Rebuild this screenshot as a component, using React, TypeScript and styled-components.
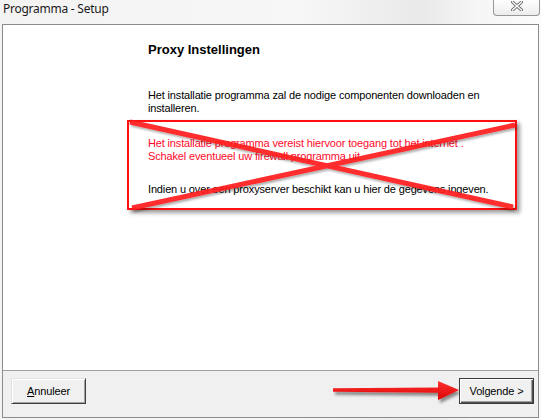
import React from "react";
import styled, { createGlobalStyle } from "styled-components";

const Global = createGlobalStyle`
  html, body { margin: 0; padding: 0; background: #f7f7f7; }
  body { font-family: "Liberation Sans", Arial, sans-serif; }
`;

const Window = styled.div`
  width: 541px;
  height: 420px;
  box-sizing: border-box;
  display: flex;
  flex-direction: column;
  background: linear-gradient(90deg, #f3f3f3 0%, #f7f7f7 55%, #e9e9e9 78%, #f6f6f6 88%, #fbfbfb 100%);
  padding-bottom: 2px;
`;

const TitleBar = styled.div`
  height: 24px;
  flex: none;
  display: flex;
  align-items: flex-start;
  justify-content: space-between;
  padding: 0 1px 0 3px;
`;

const Title = styled.div`
  font-family: "Noto Sans", "Open Sans", sans-serif;
  font-size: 12px;
  letter-spacing: -0.25px;
  line-height: 16px;
  padding-top: 1px;
  color: #1a1a1a;
`;

const CloseButton = styled.div`
  width: 47px;
  height: 16px;
  box-sizing: border-box;
  border: 1px solid #979797;
  border-top: none;
  border-radius: 0 0 4px 4px;
  background: linear-gradient(#fefefe, #ececec);
  display: flex;
  justify-content: center;
  align-items: flex-start;
  padding-top: 1px;
`;

const Dialog = styled.div`
  flex: 1;
  margin: 0 2px;
  border: 1px solid #8c8c8c;
  display: flex;
  flex-direction: column;
  background: #fff;
`;

const Panel = styled.div`
  flex: 1;
  background: #fff;
  padding: 17px 0 0 124px;
  font-size: 11px;
  line-height: 13px;
  letter-spacing: -0.15px;
  color: #000;
`;

const Heading = styled.div`
  margin-left: 21px;
  font-weight: bold;
  font-size: 13px;
  line-height: 16px;
  letter-spacing: 0;
`;

const Text = styled.p<{ $red?: boolean; $gap?: number }>`
  margin: ${(p) => p.$gap ?? 0}px 0 0 0;
  width: 360px;
  color: ${(p) => (p.$red ? "#ff0a2a" : "#000")};
`;

const Intro = styled(Text)`
  margin-left: 21px;
`;

const Annotation = styled.div`
  position: relative;
  width: 390px;
  box-sizing: border-box;
  margin-top: 5px;
  border: 2px solid #ff1010;
  padding: 15px 0 12px 19px;
  box-shadow: 3px 3px 4px rgba(0, 0, 0, 0.38);
`;

const Cross = styled.svg`
  position: absolute;
  top: -2px;
  left: -2px;
  overflow: visible;
  pointer-events: none;
`;

const Footer = styled.div`
  height: 39px;
  flex: none;
  box-sizing: content-box;
  border-top: 1px solid #a0a0a0;
  background: #f0f0f0;
  display: flex;
  align-items: flex-start;
  padding: 7px 4px 0 8px;
`;

const Spacer = styled.div`
  flex: 1;
`;

const Button = styled.button<{ $default?: boolean }>`
  width: 75px;
  height: 26px;
  box-sizing: border-box;
  padding: 0;
  font-family: "Liberation Sans", Arial, sans-serif;
  font-size: 11px;
  letter-spacing: -0.15px;
  color: #000;
  background: #f0f0f0;
  border: 1px solid;
  border-color: ${(p) => (p.$default ? "#3a3a3a" : "#e2e2e2 #404040 #404040 #e2e2e2")};
  box-shadow: ${(p) =>
    p.$default
      ? "inset 1px 1px #fff, inset -1px -1px #505050, inset -2px -2px #a0a0a0"
      : "inset 1px 1px #fff, inset -1px -1px #a0a0a0"};
`;

const Arrow = styled.svg`
  flex: none;
  overflow: visible;
`;

export default function App() {
  return (
    <>
      <Global />
      <Window>
        <TitleBar>
          <Title>Programma - Setup</Title>
          <CloseButton>
            <svg width="12" height="10" viewBox="0 0 12 10">
              <path d="M1.5 1 L10.5 9 M10.5 1 L1.5 9" stroke="#6d6d6d" strokeWidth="3.2" strokeLinecap="square" />
              <path d="M1.5 1 L10.5 9 M10.5 1 L1.5 9" stroke="#ffffff" strokeWidth="1.3" strokeLinecap="square" />
            </svg>
          </CloseButton>
        </TitleBar>
        <Dialog>
          <Panel>
            <Heading>Proxy Instellingen</Heading>
            <Intro $gap={31}>
              Het installatie programma zal de nodige componenten downloaden en installeren.
            </Intro>
            <Annotation>
              <Text $red>
                Het installatie programma vereist hiervoor toegang tot het internet .
                <br />
                Schakel eventueel uw firewall programma uit.
              </Text>
              <Text $gap={20}>
                Indien u over een proxyserver beschikt kan u hier de gegevens ingeven.
              </Text>
              <Cross width="390" height="90" viewBox="0 0 390 90">
                <defs>
                  <filter id="xs" x="-5%" y="-20%" width="110%" height="140%">
                    <feDropShadow dx="1.5" dy="2" stdDeviation="1.2" floodColor="#000" floodOpacity="0.35" />
                  </filter>
                </defs>
                <g filter="url(#xs)" stroke="#ff1a1a" strokeWidth="5" opacity="0.92">
                  <line x1="3" y1="2" x2="386" y2="87" />
                  <line x1="5" y1="88" x2="388" y2="5" />
                </g>
              </Cross>
            </Annotation>
          </Panel>
          <Footer>
            <Button>
              <u>A</u>nnuleer
            </Button>
            <Spacer />
            <Arrow width="126" height="28" viewBox="0 0 126 28">
              <defs>
                <filter id="as" x="-10%" y="-60%" width="125%" height="220%">
                  <feDropShadow dx="2" dy="3" stdDeviation="1.6" floodColor="#000" floodOpacity="0.45" />
                </filter>
                <linearGradient id="ag" x1="0" y1="0" x2="0" y2="1">
                  <stop offset="0" stopColor="#ff3434" />
                  <stop offset="1" stopColor="#dc0000" />
                </linearGradient>
              </defs>
              <path
                d="M0 10.2 L105 9.4 L105 3 L126 12 L105 22 L105 14.8 L0 13.8 Z"
                fill="url(#ag)"
                filter="url(#as)"
              />
            </Arrow>
            <Button $default>Volgende &gt;</Button>
          </Footer>
        </Dialog>
      </Window>
    </>
  );
}
